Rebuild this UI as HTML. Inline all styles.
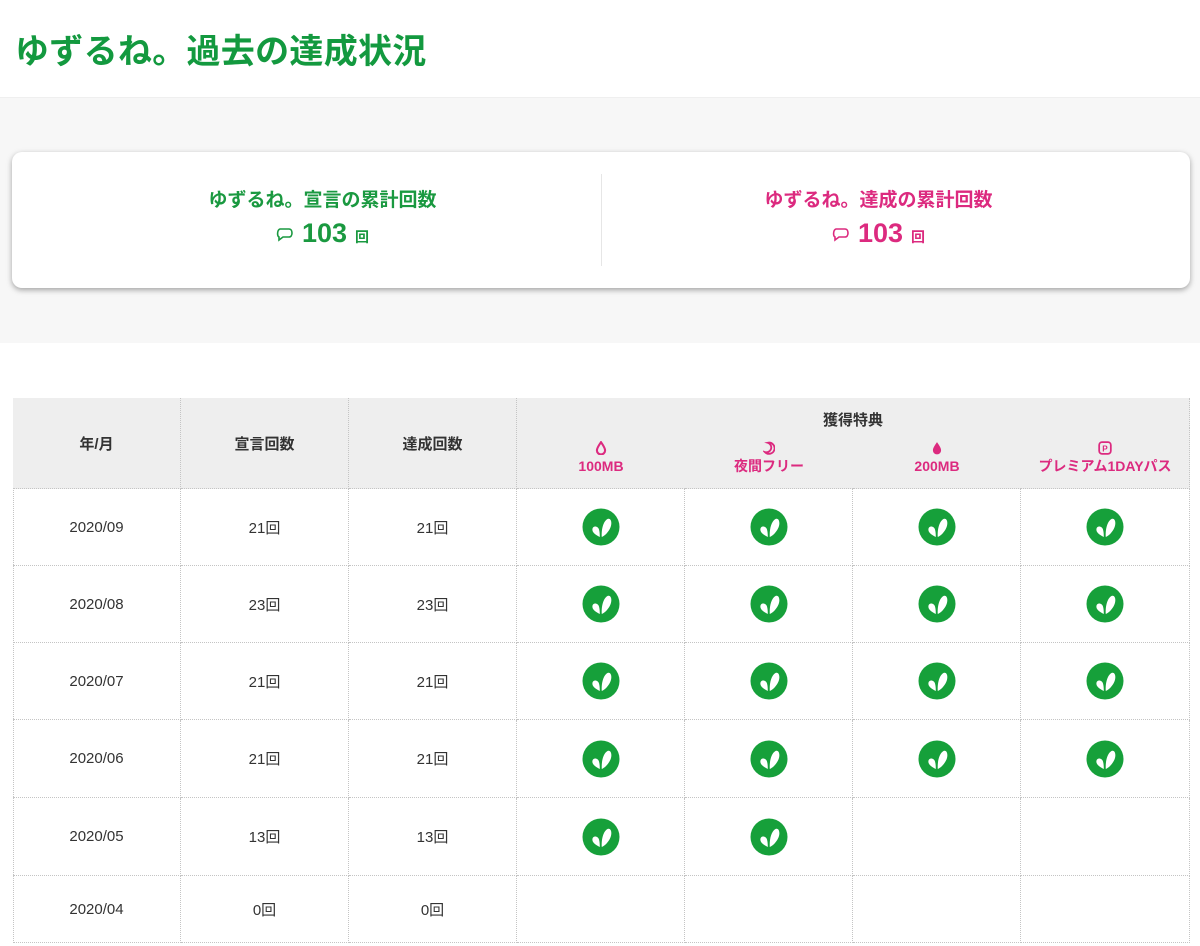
<!DOCTYPE html>
<html><head><meta charset="utf-8"><style>
*{margin:0;padding:0;box-sizing:border-box}
body{width:1200px;height:946px;background:#fff;font-family:"Liberation Sans","Noto Sans CJK JP",sans-serif;color:#333;position:relative;overflow:hidden}
h1{position:absolute;left:15px;top:24px;font-size:34px;font-weight:bold;color:#13993f;letter-spacing:0.3px}
.band{position:absolute;left:0;top:97px;width:1200px;height:246px;background:#f7f7f7;border-top:1px solid #efefef}
.card{position:absolute;left:12px;top:152px;width:1178px;height:136px;background:#fff;border-radius:10px;box-shadow:0 2px 6px rgba(0,0,0,.35)}
.half{position:absolute;top:0;width:589px;height:136px;text-align:center}
.half .t{margin-top:33px;font-size:19px;font-weight:bold}
.half .n{margin-top:6px;font-size:27px;font-weight:bold;display:flex;justify-content:center;align-items:baseline;gap:8px}
.half .n small{font-size:14px}
.sep{position:absolute;left:589px;top:22px;width:1px;height:92px;background:#e6e6e6}
.g{color:#1a9940}.p{color:#dc2a7f}
.c{position:absolute;display:flex;align-items:center;justify-content:center;font-size:15px;border-right:1px dotted #c4c4c4;border-bottom:1px dotted #c4c4c4;text-align:center}
.hd{background:#eeeeee;font-weight:bold}
.hp{color:#dc2a7f;font-size:14px;font-weight:bold;line-height:18px;flex-direction:column}
</style></head><body>
<h1>ゆずるね。過去の達成状況</h1>
<div class="band"></div>
<div class="card">
 <div class="half g" style="left:16px"><div class="t">ゆずるね。宣言の累計回数</div><div class="n"><svg width="18" height="16" viewBox="0 0 18 16" style="align-self:center"><path d="M3 11 C1 10 1 4 4 3 L13 3 C17 3 17 11 13 11 L7 11 L3 14 Z" fill="none" stroke="#1a9940" stroke-width="1.6"/></svg>103<small>回</small></div></div>
 <div class="sep"></div>
 <div class="half p" style="left:572px"><div class="t">ゆずるね。達成の累計回数</div><div class="n"><svg width="18" height="16" viewBox="0 0 18 16" style="align-self:center"><path d="M3 11 C1 10 1 4 4 3 L13 3 C17 3 17 11 13 11 L7 11 L3 14 Z" fill="none" stroke="#dc2a7f" stroke-width="1.6"/></svg>103<small>回</small></div></div>
</div>
<svg width="0" height="0" style="position:absolute"><defs><symbol id="ck" viewBox="0 0 38 38"><circle cx="19" cy="19" r="18.5" fill="#16a03a"/><path d="M17.8 29 C14 27 9.5 24.5 10.5 20.5 C11.5 17.5 15.8 18 17 21.5 C17.6 23.5 17.8 26 17.8 29Z M19.8 29 C19.3 22 21 13.5 25.5 11 C29.5 9.5 30.5 16 28 20.5 C26 24.5 23 27.5 19.8 29Z" fill="#fff"/></symbol></defs></svg>
<div style="position:absolute;left:13px;top:398px;width:1177px;height:545px;border-left:1px dotted #c4c4c4;border-top:1px dotted #c4c4c4"></div>
<div id="t"></div>
<script>
var X=[13,181,349,517,685,853,1021,1190],Y=[398,489,566,643,720,798,876,943];
var h='';
function cell(x1,y1,x2,y2,cls,html,st){h+='<div class="c '+cls+'" style="left:'+x1+'px;top:'+y1+'px;width:'+(x2-x1)+'px;height:'+(y2-y1)+'px;'+(st||'')+'">'+html+'</div>';}
['年/月','宣言回数','達成回数'].forEach(function(t,i){cell(X[i],398,X[i+1],489,'hd',t);});
cell(517,398,1190,428,'hd','<span style="margin-top:12px">獲得特典</span>','border-bottom:none');
var drop='<svg width="12" height="14" viewBox="0 0 10 12"><path d="M5 1 C3 4 1.5 6 1.5 8 A3.5 3.5 0 0 0 8.5 8 C8.5 6 7 4 5 1Z" fill="none" stroke="#dc2a7f" stroke-width="1.8"/></svg>';
var moon='<svg width="12" height="14" viewBox="0 0 10 12"><path d="M4 1.5 A4.8 4.8 0 1 1 1.5 9.5 A3.8 3.8 0 1 0 4 1.5Z" fill="none" stroke="#dc2a7f" stroke-width="1.6"/></svg>';
var drop2='<svg width="12" height="14" viewBox="0 0 10 12"><path d="M5 1 C3 4 1.5 6 1.5 8 A3.5 3.5 0 0 0 8.5 8 C8.5 6 7 4 5 1Z" fill="#dc2a7f"/></svg>';
var pp='<svg width="14" height="14" viewBox="0 0 12 12"><rect x="1" y="1" width="10" height="10" rx="2.5" fill="none" stroke="#dc2a7f" stroke-width="1.5"/><text x="6" y="9" font-size="7" font-weight="bold" text-anchor="middle" fill="#dc2a7f" font-family="Liberation Sans">P</text></svg>';
[[drop,'100MB'],[moon,'夜間フリー'],[drop2,'200MB'],[pp,'プレミアム1DAYパス']].forEach(function(a,i){cell(X[3+i],428,X[4+i],489,'hd hp',a[0]+'<span style="margin-top:2px">'+a[1]+'</span>','border-right:'+(i==3?'1px dotted #c4c4c4':'none'));});
var d=[['2020/09','21回',4],['2020/08','23回',4],['2020/07','21回',4],['2020/06','21回',4],['2020/05','13回',2],['2020/04','0回',0]];
var ck='<svg width="38" height="38"><use href="#ck"/></svg>';
d.forEach(function(r,j){var y1=Y[j+1],y2=Y[j+2];cell(X[0],y1,X[1],y2,'',r[0]);cell(X[1],y1,X[2],y2,'',r[1]);cell(X[2],y1,X[3],y2,'',r[1]);for(var k=0;k<4;k++)cell(X[3+k],y1,X[4+k],y2,'',k<r[2]?ck:'');});
document.getElementById('t').innerHTML=h;
</script>
</body></html>
